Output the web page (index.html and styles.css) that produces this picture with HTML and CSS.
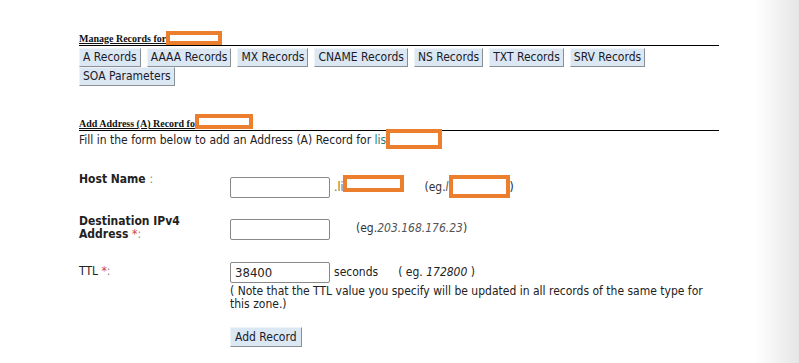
FILE: index.html
```html
<!DOCTYPE html>
<html>
<head>
<meta charset="utf-8">
<link rel="stylesheet" href="styles.css">
</head>
<body>
<div class="page">
  <div class="sec-title first">Manage Records for<span class="redact r1"></span></div>
  <div class="tabs">
    <button class="btn">A Records</button>
    <button class="btn">AAAA Records</button>
    <button class="btn">MX Records</button>
    <button class="btn">CNAME Records</button>
    <button class="btn">NS Records</button>
    <button class="btn">TXT Records</button>
    <button class="btn">SRV Records</button>
    <button class="btn">SOA Parameters</button>
  </div>

  <div class="sec-title second">Add Address (A) Record fo<span class="redact r2"></span></div>
  <div class="intro">Fill in the form below to add an Address (A) Record for <span class="teal">lis</span><span class="redact r3"></span></div>

  <div class="form">
    <div class="label bold">Host Name <span class="colon">:</span></div>
    <div class="field">
      <span class="input"></span>
      <span class="suffix">.li</span><span class="redact r4"></span>
      <span class="eg">(eg.<i>l</i></span><span class="redact r5"></span><span class="eg2">)</span>
    </div>

    <div class="label bold dest">Destination IPv4<br>Address <span class="star">*</span><span class="colon">:</span></div>
    <div class="field dest-field">
      <span class="input"></span>
      <span class="eg ip">(eg.<i>203.168.176.23</i>)</span>
    </div>

    <div class="label ttl">TTL <span class="star">*</span><span class="colon">:</span></div>
    <div class="ttl-field">
      <div class="ttl-line">
        <span class="input val">38400</span>
        <span class="secs">seconds</span>
        <span class="eg3">( eg. <i>172800</i> )</span>
      </div>
      <div class="note">( Note that the TTL value you specify will be updated in all records of the same type for this zone.)</div>
      <div><button class="btn add">Add Record</button></div>
    </div>
  </div>
</div>
</body>
</html>
```

FILE: styles.css
```css
html {
  background: linear-gradient(to right, #fff 0, #fff 755px, #e6e6e6 799px);
  min-height: 100%;
}
body {
  margin: 0;
  font-family: "DejaVu Sans Condensed", "DejaVu Sans", sans-serif;
  font-size: 12px;
  color: #222;
}
.page {
  padding-left: 79px;
  width: 640px;
}
.sec-title {
  font-family: "Liberation Serif", serif;
  font-weight: bold;
  font-size: 10px;
  line-height: 12px;
  border-bottom: 1px solid #000;
  height: 12px;
  color: #111;
  text-decoration: underline;
}
.sec-title.first { margin-top: 33px; }
.sec-title.second { margin-top: 32px; }
.redact {
  display: inline-block;
  box-sizing: border-box;
  border: 4px solid #eb7f2e;
  background: #fff;
  vertical-align: top;
}
.r1 { width: 56px; height: 14px; margin-top: -2px; }
.r2 { width: 58px; height: 15px; margin-top: -4px; }
.r3 { width: 56px; height: 20px; margin-top: -3px; }
.r4 { width: 61px; height: 17px; margin-top: -2px; }
.r5 { width: 61px; height: 23px; margin-top: -2px; }
.tabs {
  display: flex;
  flex-wrap: wrap;
  column-gap: 6px;
  margin-top: 2px;
}
.btn {
  font-family: "DejaVu Sans Condensed", "DejaVu Sans", sans-serif;
  font-size: 12px;
  color: #1a1a2a;
  background: #dbe7f3;
  border: 1px solid;
  border-color: #eef3f8 #8a8f96 #8a8f96 #eef3f8;
  height: 19px;
  padding: 0 3px;
  margin: 0;
  line-height: 17px;
}
.intro {
  font-size: 12px;
  line-height: 16px;
  margin-top: 1px;
  color: #222;
}
.teal { color: #2a7a7a; }
.form {
  display: grid;
  grid-template-columns: 151px 1fr;
  margin-top: 24px;
}
.label { font-size: 12px; line-height: 13px; }
.bold { font-weight: bold; }
.colon { color: #888; font-weight: normal; }
.star { color: #c44; font-weight: normal; }
.field { display: flex; align-items: flex-start; padding-top: 4px; }
.input {
  display: inline-block;
  box-sizing: border-box;
  width: 100px;
  height: 21px;
  border: 1px solid #888;
  border-radius: 2px;
  background: #fff;
  font-size: 13px;
  line-height: 19px;
  padding-left: 4px;
  flex: none;
}
.suffix { margin-left: 4px; margin-top: 3px; color: #8a6d2a; }
.eg { margin-left: 20px; margin-top: 3px; color: #333; }
.eg i { color: #555; }
.eg2 { margin-top: 3px; }
.dest, .dest-field { margin-top: 17px; }
.ip { margin-left: 26px; margin-top: 2px; }
.ttl { margin-top: 24px; }
.ttl-field { margin-top: 21px; }
.ttl-line { display: flex; align-items: flex-start; }
.secs { margin-left: 4px; margin-top: 3px; }
.eg3 { margin-left: 20px; margin-top: 3px; }
.note { line-height: 13px; margin-top: 2px; width: 490px; }
.btn.add { margin-top: 16px; height: 20px; padding: 0 4px; }
```
